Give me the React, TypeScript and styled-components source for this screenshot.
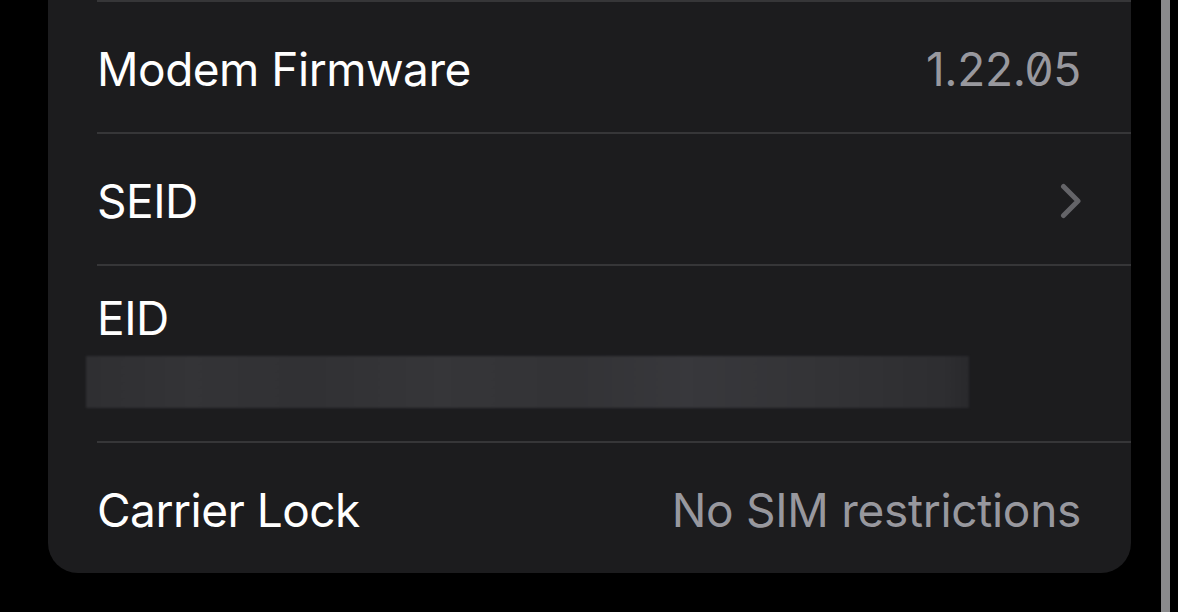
import React from "react";
import styled, { createGlobalStyle } from "styled-components";

const GlobalStyle = createGlobalStyle`
  html, body {
    margin: 0;
    padding: 0;
    background: #000;
    height: 612px;
    overflow: hidden;
  }
  body {
    font-family: Inter, "Noto Sans", "Liberation Sans", sans-serif;
    -webkit-font-smoothing: antialiased;
  }
`;

const Page = styled.div`
  display: flex;
  align-items: flex-start;
  width: 1178px;
  height: 612px;
  background: #000;
`;

const Card = styled.div`
  margin-left: 48px;
  width: 1083px;
  background: #1c1c1e;
  border-radius: 0 0 30px 30px;
  overflow: hidden;
`;

const ScrollTrack = styled.div`
  margin-left: 30px;
  width: 9px;
  height: 612px;
  background: #8a8a8c;
`;

const Row = styled.div`
  padding-left: 49px;
`;

const RowInner = styled.div<{ $h: number; $stack?: boolean }>`
  height: ${(p) => p.$h}px;
  box-sizing: border-box;
  border-top: 2px solid #363638;
  padding-right: 50px;
  display: flex;
  flex-direction: ${(p) => (p.$stack ? "column" : "row")};
  align-items: ${(p) => (p.$stack ? "flex-start" : "center")};
  justify-content: ${(p) => (p.$stack ? "flex-start" : "space-between")};
  padding-top: ${(p) => (p.$stack ? 24 : 4)}px;
`;

const Label = styled.span`
  color: #ffffff;
  font-size: 46px;
  line-height: 56px;
  font-weight: 400;
  letter-spacing: -0.5px;
  white-space: nowrap;
`;

const Value = styled.span`
  color: #98989e;
  font-size: 46px;
  line-height: 56px;
  font-weight: 400;
  letter-spacing: -0.3px;
  white-space: nowrap;
  font-feature-settings: "zero" 1;
`;

const Redacted = styled.div`
  margin-top: 10px;
  margin-left: -11px;
  width: 883px;
  height: 52px;
  background: linear-gradient(
    90deg,
    #2f2f32 0%,
    #343437 12%,
    #313134 25%,
    #363639 40%,
    #333336 55%,
    #38383c 68%,
    #343437 82%,
    #2e2e31 97%,
    #29292c 100%
  );
  filter: blur(0.8px);
`;

const Chevron = () => (
  <svg width="22" height="36" viewBox="0 0 22 36" style={{ marginRight: -1 }}>
    <path
      d="M3.5 3.5 L18 18 L3.5 32.5"
      fill="none"
      stroke="#646468"
      strokeWidth="5"
      strokeLinecap="round"
      strokeLinejoin="round"
    />
  </svg>
);

export default function App() {
  return (
    <>
      <GlobalStyle />
      <Page>
        <Card>
          <Row>
            <RowInner $h={132}>
              <Label>Modem Firmware</Label>
              <Value>1.22.05</Value>
            </RowInner>
          </Row>
          <Row>
            <RowInner $h={132}>
              <Label>SEID</Label>
              <Chevron />
            </RowInner>
          </Row>
          <Row>
            <RowInner $h={177} $stack>
              <Label>EID</Label>
              <Redacted />
            </RowInner>
          </Row>
          <Row>
            <RowInner $h={132}>
              <Label>Carrier Lock</Label>
              <Value>No SIM restrictions</Value>
            </RowInner>
          </Row>
        </Card>
        <ScrollTrack />
      </Page>
    </>
  );
}
